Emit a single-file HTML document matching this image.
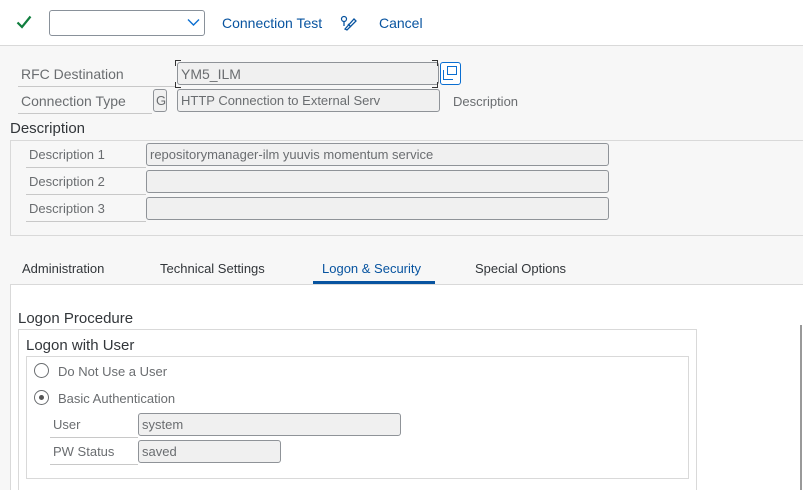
<!DOCTYPE html>
<html style="width:803px;height:490px;overflow:hidden"><head><style>
*{margin:0;padding:0;box-sizing:border-box}
body{width:803px;height:490px;overflow:hidden;background:#f7f7f7;font-family:"Liberation Sans",sans-serif;font-size:13px;color:#32363a;position:relative}
.a{position:absolute;white-space:nowrap}
.lbl{position:absolute;color:#6a6d70;border-bottom:1px solid #c8c8c8;height:25px;line-height:24px;padding-left:3px;font-size:13px}
.inp{position:absolute;background:#f0f0f0;border:1px solid #8f9398;border-radius:3px;height:23px;line-height:22px;padding-left:3px;color:#6a6d70;font-size:13px}
.tab{position:absolute;top:261px;font-size:13px;color:#32363a}
</style></head><body>
<div class="a" style="left:0;top:0;width:803px;height:46px;background:#fff;border-bottom:1px solid #d9d9d9"></div>
<svg class="a" style="left:16px;top:15px" width="16" height="14" viewBox="0 0 16 14"><path d="M1.5 7.5 L6 12 L14.5 1.5" fill="none" stroke="#107e3e" stroke-width="2.2"/></svg>
<div class="a" style="left:49px;top:10px;width:156px;height:26px;border:1px solid #89919a;border-radius:3px;background:#fff"></div>
<svg class="a" style="left:187px;top:18px" width="13" height="9" viewBox="0 0 13 9"><path d="M1 1.5 L6.5 7 L12 1.5" fill="none" stroke="#0a6ed1" stroke-width="1.4"/></svg>
<div class="a" style="left:222px;top:15px;color:#0854a0;font-size:14px">Connection Test</div>
<svg class="a" style="left:340px;top:14px" width="18" height="18" viewBox="0 0 18 18"><circle cx="4" cy="5" r="2.5" fill="none" stroke="#0854a0" stroke-width="1.2"/><path d="M4 7.5 V12 M5 15 L14 5 L16 7 L7 16 Z M8 10 L11 13" fill="none" stroke="#0854a0" stroke-width="1.3"/></svg>
<div class="a" style="left:379px;top:15px;color:#0854a0;font-size:14px">Cancel</div>

<div class="lbl" style="left:18px;top:62px;width:157px;font-size:14px">RFC Destination</div>
<div class="inp" style="left:177px;top:62px;width:262px;font-size:14px">YM5_ILM</div>
<div class="a" style="left:175px;top:60px;width:6px;height:6px;border-left:1px solid #333;border-top:1px solid #333"></div>
<div class="a" style="left:175px;top:82px;width:6px;height:6px;border-left:1px solid #333;border-bottom:1px solid #333"></div>
<div class="a" style="left:432px;top:60px;width:6px;height:6px;border-right:1px solid #333;border-top:1px solid #333"></div>
<div class="a" style="left:432px;top:82px;width:6px;height:6px;border-right:1px solid #333;border-bottom:1px solid #333"></div>
<div class="a" style="left:440px;top:62px;width:21px;height:23px;border:1px solid #0a6ed1;border-radius:3px;background:#fff"></div>
<div class="a" style="left:447px;top:66px;width:10px;height:9px;border:1.5px solid #0a6ed1"></div>
<div class="a" style="left:443px;top:70px;width:10px;height:10px;border-left:1.5px solid #0a6ed1;border-bottom:1.5px solid #0a6ed1"></div>
<div class="lbl" style="left:18px;top:89px;width:134px;font-size:14px">Connection Type</div>
<div class="inp" style="left:153px;top:89px;width:14px;padding-left:2px">G</div>
<div class="inp" style="left:177px;top:89px;width:263px">HTTP Connection to External Serv</div>
<div class="a" style="left:453px;top:94px;color:#6a6d70">Description</div>

<div class="a" style="left:10px;top:120px;font-size:15px;color:#32363a">Description</div>
<div class="a" style="left:10px;top:140px;width:793px;height:96px;border:1px solid #d9d9d9;border-right:none"></div>
<div class="lbl" style="left:26px;top:143px;width:120px">Description 1</div>
<div class="inp" style="left:146px;top:143px;width:463px">repositorymanager-ilm yuuvis momentum service</div>
<div class="lbl" style="left:26px;top:170px;width:120px">Description 2</div>
<div class="inp" style="left:146px;top:170px;width:463px"></div>
<div class="lbl" style="left:26px;top:197px;width:120px">Description 3</div>
<div class="inp" style="left:146px;top:197px;width:463px"></div>

<div class="tab" style="left:22px">Administration</div>
<div class="tab" style="left:160px">Technical Settings</div>
<div class="tab" style="left:322px;color:#0854a0">Logon &amp; Security</div>
<div class="tab" style="left:475px">Special Options</div>
<div class="a" style="left:313px;top:281px;width:122px;height:3px;background:#0854a0"></div>
<div class="a" style="left:10px;top:284px;width:793px;height:206px;background:#fff;border-top:1px solid #d9d9d9;border-left:1px solid #d9d9d9"></div>
<div class="a" style="left:800px;top:325px;width:2px;height:165px;background:#999"></div>

<div class="a" style="left:18px;top:310px;font-size:15px">Logon Procedure</div>
<div class="a" style="left:18px;top:329px;width:679px;height:161px;border:1px solid #d9d9d9;border-bottom:none"></div>
<div class="a" style="left:26px;top:337px;font-size:15px">Logon with User</div>
<div class="a" style="left:26px;top:356px;width:663px;height:123px;border:1px solid #d9d9d9"></div>
<div class="a" style="left:34px;top:363px;width:15px;height:15px;border:1px solid #6a6d70;border-radius:50%"></div>
<div class="a" style="left:58px;top:364px;color:#6a6d70">Do Not Use a User</div>
<div class="a" style="left:34px;top:390px;width:15px;height:15px;border:1px solid #6a6d70;border-radius:50%"></div>
<div class="a" style="left:39px;top:395px;width:5px;height:5px;background:#555;border-radius:50%"></div>
<div class="a" style="left:58px;top:391px;color:#6a6d70">Basic Authentication</div>
<div class="lbl" style="left:50px;top:413px;width:88px">User</div>
<div class="inp" style="left:138px;top:413px;width:263px">system</div>
<div class="lbl" style="left:50px;top:440px;width:88px">PW Status</div>
<div class="inp" style="left:138px;top:440px;width:143px">saved</div>
</body></html>
